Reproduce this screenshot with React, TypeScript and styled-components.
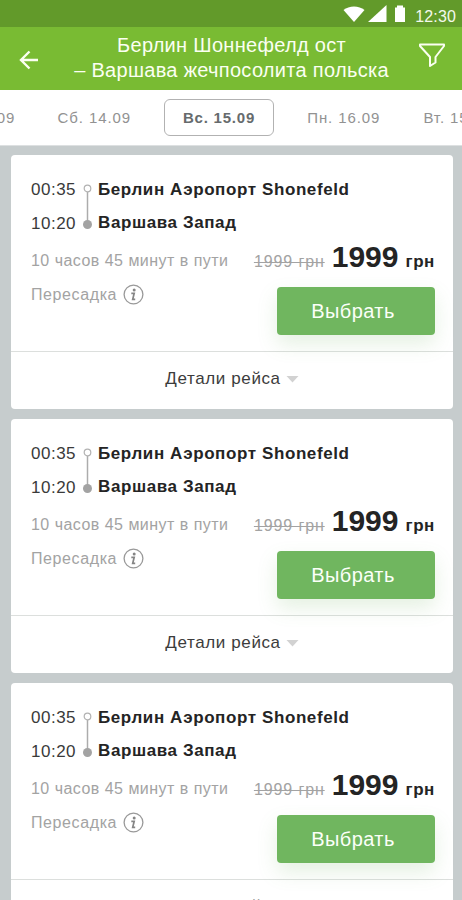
import React from 'react';
import styled, { createGlobalStyle } from 'styled-components';

const GlobalStyle = createGlobalStyle`
  * { box-sizing: border-box; }
  body {
    margin: 0;
    background: #c6cccd;
    font-family: "Liberation Sans", Arial, sans-serif;
  }
`;

const Screen = styled.div`
  width: 462px;
  height: 900px;
  overflow: hidden;
  display: flex;
  flex-direction: column;
  background: #c6cccd;
`;

const StatusBar = styled.div`
  flex: none;
  height: 27px;
  padding: 4px 6px 0 0;
  display: flex;
  justify-content: flex-end;
  align-items: flex-start;
  background: #629a2a;
  color: #f4f9ec;
`;

const Clock = styled.span`
  margin: 3px 0 0 7px;
  font-size: 16px;
  line-height: 20px;
  letter-spacing: 0.15px;
`;

const Header = styled.header`
  flex: none;
  height: 63px;
  padding: 0 14px 0 18px;
  display: grid;
  grid-template-columns: 24px 1fr 30px;
  align-items: start;
  background: #79bb33;
  color: #fbfff2;
`;

const IconButton = styled.button<{ $top: number }>`
  margin: ${(p) => p.$top}px 0 0;
  padding: 0;
  border: 0;
  background: none;
  color: inherit;
  display: flex;
`;

const Title = styled.h1`
  margin: 6px 0 0 3px;
  font-size: 20px;
  line-height: 24.5px;
  font-weight: 400;
  text-align: center;
  white-space: nowrap;
`;

const TitleLine = styled.span`
  display: block;
  letter-spacing: 0.3px;
`;

const Dates = styled.nav`
  flex: none;
  height: 56px;
  margin-left: -64px;
  width: 590px;
  display: flex;
  align-items: flex-start;
  gap: 25.5px;
  padding-top: 9px;
  background: #fff;
  border-bottom: 1px solid #dde0e1;
`;

const DateTab = styled.button<{ $active?: boolean }>`
  flex: none;
  width: ${(p) => (p.$active ? 110 : 88.5)}px;
  height: 37px;
  padding: 0 0 1px;
  border: 1.5px solid ${(p) => (p.$active ? '#b2b2b2' : 'transparent')};
  border-radius: 6px;
  background: none;
  font: ${(p) => (p.$active ? 700 : 400)} 15px "Liberation Sans", Arial, sans-serif;
  letter-spacing: ${(p) => (p.$active ? 0.8 : 0.9)}px;
  color: ${(p) => (p.$active ? '#666b6d' : '#929292')};
  white-space: nowrap;
`;

const Trips = styled.main`
  padding: 9px 9px 0 11px;
  display: flex;
  flex-direction: column;
  gap: 10px;
`;

const Card = styled.article`
  flex: none;
  height: 254px;
  border-radius: 4px;
  background: #fff;
  color: #242424;
`;

const CardBody = styled.div`
  height: 196px;
  padding: 18px 18px 0 20px;
`;

const Route = styled.div`
  display: grid;
  grid-template-columns: 46px 21px 1fr;
  grid-template-rows: 34px 34px;
  line-height: 34px;
  white-space: nowrap;
`;

const Time = styled.time`
  font-size: 17px;
  letter-spacing: 0.5px;
  color: #3a3a3a;
`;

const Track = styled.svg`
  grid-column: 2;
  grid-row: 1 / 3;
  margin-left: 4px;
`;

const Station = styled.strong`
  grid-column: 3;
  font-size: 17px;
  letter-spacing: 0.6px;

  &:last-child {
    line-height: 32px;
  }
`;

const Offer = styled.div`
  display: flex;
  justify-content: space-between;
  white-space: nowrap;
`;

const Facts = styled.div`
  padding-top: 3px;
  font-size: 16px;
  line-height: 33.5px;
  color: #a3a3a3;
`;

const Duration = styled.div`
  letter-spacing: 0.47px;
`;

const Transfer = styled.div`
  display: flex;
  align-items: center;
  gap: 6px;
  letter-spacing: 0.6px;
`;

const Purchase = styled.div`
  display: flex;
  flex-direction: column;
  align-items: flex-end;
`;

const Prices = styled.div`
  height: 46px;
  display: flex;
  align-items: baseline;
  line-height: 32px;
`;

const OldPrice = styled.s`
  margin-right: 7px;
  font-size: 16px;
  color: #a3a3a3;
  letter-spacing: 0.9px;
`;

const Price = styled.strong`
  font-size: 30px;
`;

const Currency = styled.strong`
  margin-left: 7px;
  font-size: 17px;
  letter-spacing: 0.6px;
`;

const SelectButton = styled.button`
  width: 158px;
  height: 48px;
  padding: 0 6px 0 0;
  border: 0;
  border-radius: 4px;
  background: #70b65f;
  box-shadow: 0 9px 20px rgba(100, 170, 85, 0.17);
  color: #fbfff8;
  font: 400 20px "Liberation Sans", Arial, sans-serif;
  letter-spacing: 0.45px;
`;

const DetailsToggle = styled.button`
  width: 100%;
  height: 57px;
  padding: 0 0 2px;
  border: 0;
  border-top: 1px solid #dcdfdd;
  background: none;
  display: flex;
  justify-content: center;
  align-items: center;
  gap: 5px;
  font: 400 17px "Liberation Sans", Arial, sans-serif;
  letter-spacing: 0.62px;
  color: #3c3c3c;
`;

const StatusIcons = () => (
  <svg width="66" height="20" viewBox="0 0 66 20" fill="#fff">
    <path d="M1.500 6C7 1.200 17 1.200 22.500 6L12 18Z" />
    <path d="M26 18L44.500 1V18Z" />
    <path d="M53 3.500h2V1.500h6v2h2V18h-10Z" />
  </svg>
);

const BackIcon = () => (
  <svg width="22" height="20" viewBox="0 0 22 20" fill="none" stroke="currentColor" strokeWidth="2.4">
    <path d="M11.500 1.500L3 10L11.500 18.500M3 10H20" />
  </svg>
);

const FilterIcon = () => (
  <svg width="28" height="26" viewBox="0 0 28 26" fill="none" stroke="currentColor" strokeWidth="2" strokeLinejoin="round">
    <path d="M2 2.500H26V4L17.500 15V20.500L12 24V15L2 4Z" />
  </svg>
);

const InfoIcon = () => (
  <svg width="21" height="21" viewBox="0 0 21 21" fill="none" stroke="#999">
    <circle cx="10.500" cy="10.500" r="9.400" strokeWidth="1.300" />
    <circle cx="11.200" cy="6" r="1.500" fill="#858585" stroke="none" />
    <path d="M8.300 9.300H11.200L9.700 15.300H12.200" stroke="#858585" strokeWidth="1.700" />
  </svg>
);

const RouteTrack = () => (
  <Track width="12" height="68" viewBox="0 0 12 68">
    <path d="M6.500 19V52" stroke="#acacac" strokeWidth="1.500" />
    <circle cx="6.500" cy="15.500" r="3.300" fill="#fff" stroke="#b2b2b2" strokeWidth="1.200" />
    <circle cx="6.500" cy="51.500" r="4.500" fill="#a3a3a3" />
  </Track>
);

const dates = ['Пт. 13.09', 'Сб. 14.09', 'Вс. 15.09', 'Пн. 16.09', 'Вт. 15.09'];
const trips = [1, 2, 3];

const TripCard = () => (
  <Card>
    <CardBody>
      <Route>
        <Time>00:35</Time>
        <RouteTrack />
        <Station>Берлин Аэропорт Shonefeld</Station>
        <Time>10:20</Time>
        <Station>Варшава Запад</Station>
      </Route>
      <Offer>
        <Facts>
          <Duration>10 часов 45 минут в пути</Duration>
          <Transfer>
            Пересадка
            <InfoIcon />
          </Transfer>
        </Facts>
        <Purchase>
          <Prices>
            <OldPrice>1999 грн</OldPrice>
            <Price>1999</Price>
            <Currency>грн</Currency>
          </Prices>
          <SelectButton>Выбрать</SelectButton>
        </Purchase>
      </Offer>
    </CardBody>
    <DetailsToggle>
      Детали рейса
      <svg width="13" height="8" viewBox="0 0 13 8" fill="#d2d2d2">
        <path d="M0.500 1H12.500L6.500 7.500Z" />
      </svg>
    </DetailsToggle>
  </Card>
);

export default function App() {
  return (
    <Screen>
      <GlobalStyle />
      <StatusBar>
        <StatusIcons />
        <Clock>12:30</Clock>
      </StatusBar>
      <Header>
        <IconButton $top={23} aria-label="Назад">
          <BackIcon />
        </IconButton>
        <Title>
          <TitleLine>Берлин Шоннефелд ост</TitleLine>
          <TitleLine>– Варшава жечпосолита польска</TitleLine>
        </Title>
        <IconButton $top={15} aria-label="Фильтр">
          <FilterIcon />
        </IconButton>
      </Header>
      <Dates>
        {dates.map((date) => (
          <DateTab key={date} $active={date === 'Вс. 15.09'}>
            {date}
          </DateTab>
        ))}
      </Dates>
      <Trips>
        {trips.map((trip) => (
          <TripCard key={trip} />
        ))}
      </Trips>
    </Screen>
  );
}
